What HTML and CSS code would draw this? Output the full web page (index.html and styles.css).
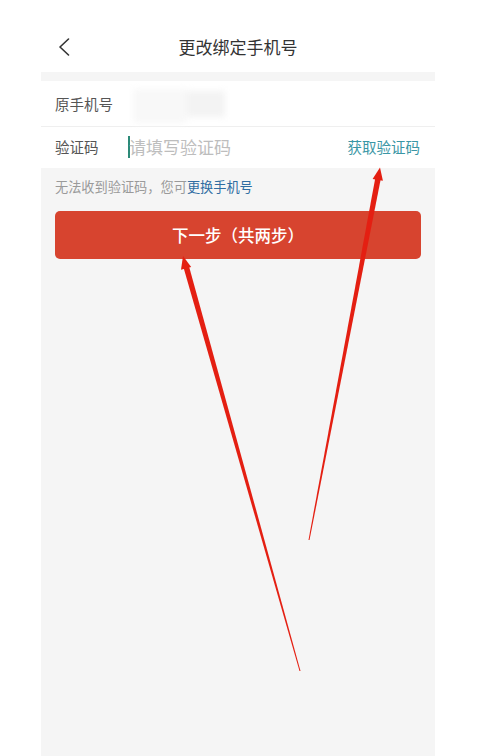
FILE: index.html
```html
<!DOCTYPE html>
<html lang="zh-CN">
<head>
<meta charset="utf-8">
<title>更改绑定手机号</title>
<link rel="stylesheet" href="styles.css">
</head>
<body>
<div class="screen">
  <header class="nav">
    <svg class="back" width="12" height="18" viewBox="0 0 12 18"><path d="M10.5 1 L2 9 L10.5 17" fill="none" stroke="#333" stroke-width="1.6" stroke-linecap="round" stroke-linejoin="round"/></svg>
    <h1 class="title">更改绑定手机号</h1>
    <span class="spacer"></span>
  </header>
  <main class="content">
    <section class="form">
      <div class="row">
        <span class="label">原手机号</span>
        <span class="masked"><span class="m1"></span><span class="m2"></span></span>
      </div>
      <div class="row row-code">
        <span class="label">验证码</span>
        <span class="caret"></span>
        <span class="placeholder">请填写验证码</span>
        <span class="get-code">获取验证码</span>
      </div>
    </section>
    <p class="hint">无法收到验证码，您可<span class="link">更换手机号</span></p>
    <div class="btn">下一步（共两步）</div>
  </main>
</div>
<svg class="arrows" width="483" height="756" viewBox="0 0 483 756">
  <polygon fill="#e41f12" points="183.3,266.8 188.7,265.2 300.5,670.9 299.5,671.1"/>
  <polygon fill="#e41f12" points="183,256 181.0,269.8 191.2,267.0"/>
  <polygon fill="#e41f12" points="375.6,176.2 381.1,177.3 309.5,540.1 308.5,539.9"/>
  <polygon fill="#e41f12" points="380,167.5 372.6,178.9 382.9,180.7"/>
</svg>
</body>
</html>
```

FILE: styles.css
```css
html, body {
  margin: 0;
  padding: 0;
  background: #ffffff;
}
body {
  position: relative;
  width: 483px;
  height: 756px;
  overflow: hidden;
  font-family: "Noto Sans CJK SC", "Noto Sans", sans-serif;
}
.screen {
  width: 394px;
  margin-left: 41px;
  height: 756px;
  display: flex;
  flex-direction: column;
}
.nav {
  height: 50px;
  padding: 22px 17px 0 17px;
  display: flex;
  align-items: center;
  background: #fff;
}
.back {
  display: block;
  width: 12px;
  height: 18px;
}
.spacer {
  width: 12px;
}
.title {
  flex: 1;
  margin: 0;
  text-align: center;
  font-size: 17px;
  font-weight: 400;
  color: #333;
  line-height: 24px;
}
.content {
  flex: 1;
  background: #f5f5f5;
  padding-top: 9px;
  display: flex;
  flex-direction: column;
}
.form {
  background: #fff;
}
.row {
  height: 45px;
  display: flex;
  align-items: center;
  padding-left: 14px;
  border-bottom: 1px solid #efefef;
}
.row-code {
  height: 39px;
  padding-bottom: 2px;
  border-bottom: none;
  padding-right: 15px;
}
.label {
  width: 73px;
  flex: none;
  font-size: 14.5px;
  color: #555;
}
.masked {
  display: flex;
  align-items: flex-end;
  height: 38px;
  margin-left: 5px;
  filter: blur(3px);
}
.m1 {
  width: 54px;
  height: 34px;
  background: #f8f8f8;
}
.m2 {
  width: 38px;
  height: 26px;
  background: #f3f3f3;
  margin-bottom: 6px;
}
.caret {
  width: 2px;
  height: 22px;
  background: #2c8a78;
  flex: none;
}
.placeholder {
  flex: 1;
  font-size: 17px;
  color: #bdbdbd;
  margin-left: -1px;
}
.get-code {
  font-size: 14.5px;
  color: #3a96a5;
}
.hint {
  margin: 10px 0 0 14px;
  font-size: 13.2px;
  line-height: 17px;
  color: #9a9a9a;
}
.link {
  color: #2f6da2;
}
.btn {
  margin: 16px 14px 0 14px;
  height: 48px;
  border-radius: 5px;
  background: #d7442f;
  color: #fff;
  font-size: 16.5px;
  font-weight: 500;
  display: flex;
  align-items: center;
  justify-content: center;
}
.arrows {
  position: absolute;
  top: 0;
  left: 0;
  pointer-events: none;
}
```
